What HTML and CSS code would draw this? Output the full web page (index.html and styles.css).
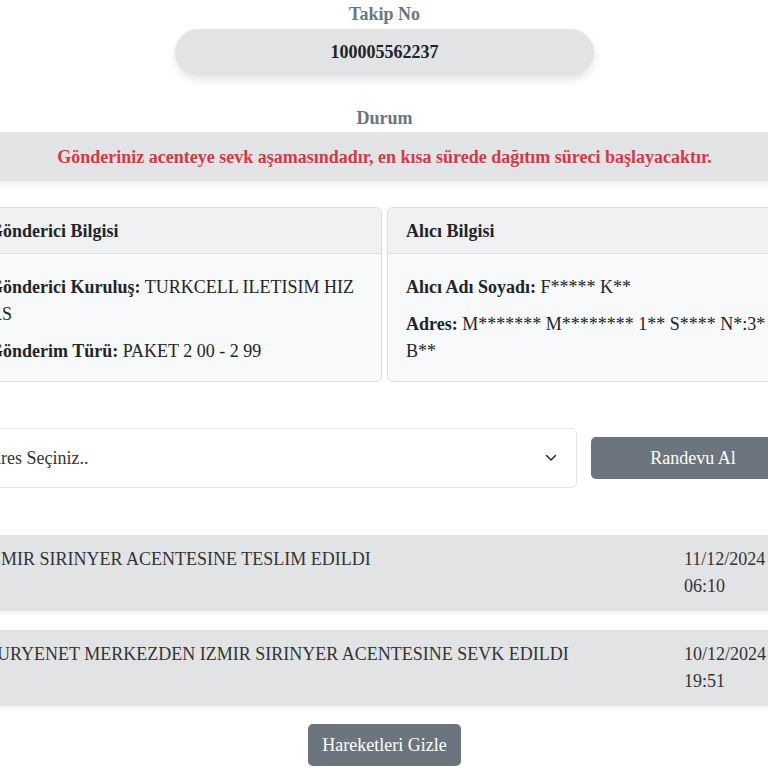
FILE: index.html
```html
<!DOCTYPE html>
<html lang="tr">
<head>
  <meta charset="UTF-8">
  <meta name="viewport" content="width=device-width, initial-scale=1.0">
  <title>Gönderi Takip</title>
  <link rel="stylesheet" href="styles.css">
</head>
<body>
  <div class="page">
    <div class="field-label">Takip No</div>
    <div class="tracking-no">100005562237</div>

    <div class="field-label field-label-status">Durum</div>
    <div class="status-bar">Gönderiniz acenteye sevk aşamasındadır, en kısa sürede dağıtım süreci başlayacaktır.</div>

    <div class="info-cards">
      <div class="info-card">
        <div class="info-card-header">Gönderici Bilgisi</div>
        <div class="info-card-body">
          <p><strong>Gönderici Kuruluş:</strong> TURKCELL ILETISIM HIZ AS</p>
          <p><strong>Gönderim Türü:</strong> PAKET 2 00 - 2 99</p>
        </div>
      </div>
      <div class="info-card">
        <div class="info-card-header">Alıcı Bilgisi</div>
        <div class="info-card-body">
          <p><strong>Alıcı Adı Soyadı:</strong> F***** K**</p>
          <p><strong>Adres:</strong> M******* M******** 1** S**** N*:3* B**</p>
        </div>
      </div>
    </div>

    <div class="appointment">
      <div class="address-select">
        <span>Adres Seçiniz..</span>
        <svg width="12" height="8" viewBox="0 0 12 8"><path d="M1.5 1.5 L6 6 L10.5 1.5" fill="none" stroke="#333" stroke-width="1.6" stroke-linecap="round" stroke-linejoin="round"/></svg>
      </div>
      <button class="btn btn-gray btn-appointment">Randevu Al</button>
    </div>

    <div class="movements">
      <div class="movement">
        <div class="movement-text">IZMIR SIRINYER ACENTESINE TESLIM EDILDI</div>
        <div class="movement-date">11/12/2024<br>06:10</div>
      </div>
      <div class="movement">
        <div class="movement-text">KURYENET MERKEZDEN IZMIR SIRINYER ACENTESINE SEVK EDILDI</div>
        <div class="movement-date">10/12/2024<br>19:51</div>
      </div>
    </div>

    <div class="actions">
      <button class="btn btn-gray">Hareketleri Gizle</button>
    </div>
  </div>
</body>
</html>
```

FILE: styles.css
```css
body {
  font-family: 'Liberation Serif', 'Times New Roman', serif;
  font-size: 18px;
  line-height: 27px;
  color: #212529;
  background-color: white;
  margin: 0;
  overflow-x: hidden;
}
.page {
  width: 829px;
  margin-left: -30px;
  padding-top: 1px;
}
.field-label {
  text-align: center;
  font-weight: bold;
  color: #6c757d;
  margin-bottom: 1px;
}
.field-label-status {
  margin-top: 29px;
  margin-bottom: 0;
}
.tracking-no {
  width: 419px;
  margin: 0 auto;
  padding: 10px 0;
  text-align: center;
  font-weight: bold;
  background-color: #e2e3e5;
  border-radius: 24px;
  box-shadow: 0 4px 8px rgba(0, 0, 0, 0.1);
}
.status-bar {
  padding: 12px 0 10px;
  text-align: center;
  font-weight: bold;
  color: #dc3545;
  background-color: #e2e3e5;
  box-shadow: 0 3px 6px rgba(0, 0, 0, 0.08);
}
/* Sender / receiver cards */
.info-cards {
  display: grid;
  grid-template-columns: 1fr 1fr;
  gap: 5px;
  margin-top: 26px;
}
.info-card {
  background-color: #f8f9fa;
  border: 1px solid #dcdde0;
  border-radius: 6px;
  overflow: hidden;
}
.info-card-header {
  padding: 10px 18px 8px;
  font-weight: bold;
  background-color: #f0f1f3;
  border-bottom: 1px solid #dcdde0;
}
.info-card-body {
  padding: 20px 18px 16px;
}
.info-card-body p {
  margin: 0 0 10px;
}
.info-card-body p:last-child {
  margin-bottom: 0;
}
/* Address select + appointment button */
.appointment {
  display: flex;
  align-items: center;
  gap: 14px;
  margin-top: 46px;
}
.address-select {
  flex: 1;
  height: 58px;
  display: flex;
  align-items: center;
  justify-content: space-between;
  padding: 0 19px 0 8px;
  background-color: white;
  border: 1px solid #e4e5e7;
  border-radius: 6px;
  color: #333;
}
.btn {
  font-family: inherit;
  font-size: 18px;
  height: 42px;
  padding: 0 14px;
  border: none;
  border-radius: 5px;
  cursor: pointer;
}
.btn-gray {
  background-color: #6c757d;
  color: white;
}
.btn-appointment {
  flex: 0 0 204px;
  margin-right: 4px;
}
/* Shipment movements */
.movements {
  display: flex;
  flex-direction: column;
  gap: 19px;
  margin-top: 47px;
}
.movement {
  display: flex;
  padding: 11px 14px;
  background-color: #e2e3e5;
  color: #333;
  box-shadow: 0 2px 5px rgba(0, 0, 0, 0.07);
}
.movement-text {
  flex: 1;
}
.movement-date {
  flex: 0 0 101px;
}
.actions {
  display: flex;
  justify-content: center;
  margin-top: 18px;
}
```
